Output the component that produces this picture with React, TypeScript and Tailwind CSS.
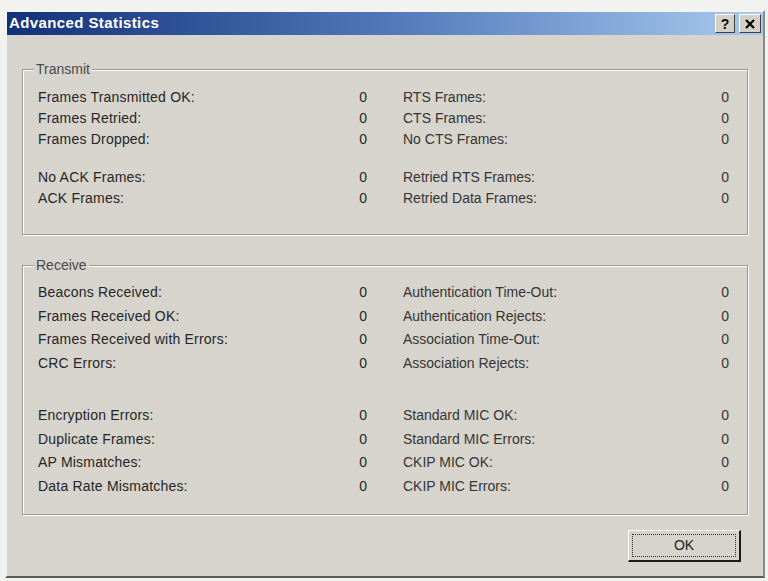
import React from "react";

type Pair = [string, string];
type Row = [Pair, Pair];

const transmit: Row[][] = [
  [
    [["Frames Transmitted OK:", "0"], ["RTS Frames:", "0"]],
    [["Frames Retried:", "0"], ["CTS Frames:", "0"]],
    [["Frames Dropped:", "0"], ["No CTS Frames:", "0"]],
  ],
  [
    [["No ACK Frames:", "0"], ["Retried RTS Frames:", "0"]],
    [["ACK Frames:", "0"], ["Retried Data Frames:", "0"]],
  ],
];

const receive: Row[][] = [
  [
    [["Beacons Received:", "0"], ["Authentication Time-Out:", "0"]],
    [["Frames Received OK:", "0"], ["Authentication Rejects:", "0"]],
    [["Frames Received with Errors:", "0"], ["Association Time-Out:", "0"]],
    [["CRC Errors:", "0"], ["Association Rejects:", "0"]],
  ],
  [
    [["Encryption Errors:", "0"], ["Standard MIC OK:", "0"]],
    [["Duplicate Frames:", "0"], ["Standard MIC Errors:", "0"]],
    [["AP Mismatches:", "0"], ["CKIP MIC OK:", "0"]],
    [["Data Rate Mismatches:", "0"], ["CKIP MIC Errors:", "0"]],
  ],
];

function StatRow({ row, h }: { row: Row; h: string }) {
  return (
    <div className={`flex items-center ${h}`}>
      <div className="flex w-[329px] justify-between text-[#262626]">
        <span className="tracking-[0.2px]">{row[0][0]}</span>
        <span>{row[0][1]}</span>
      </div>
      <div className="w-[36px]" />
      <div className="flex w-[326px] justify-between text-[#353535]">
        <span>{row[1][0]}</span>
        <span>{row[1][1]}</span>
      </div>
    </div>
  );
}

function Group({
  title,
  groups,
  rowH,
  gap,
  className,
}: {
  title: string;
  groups: Row[][];
  rowH: string;
  gap: string;
  className: string;
}) {
  return (
    <div
      className={`relative border border-[#9a9890] shadow-[inset_1px_1px_0_#ffffff,1px_1px_0_#ffffff] ${className}`}
    >
      <span className="absolute -top-[10px] left-[11px] bg-[#d7d4cd] px-[2px] text-[14px] leading-[18px] text-[#4a4a4a]">
        {title}
      </span>
      <div className={`flex flex-col pl-[15px] ${gap}`}>
        {groups.map((g, i) => (
          <div key={i} className="flex flex-col">
            {g.map((r, j) => (
              <StatRow key={j} row={r} h={rowH} />
            ))}
          </div>
        ))}
      </div>
    </div>
  );
}

export default function App() {
  return (
    <div
      className="h-[581px] w-[768px] overflow-hidden bg-[#f2f2f0] pl-[5px] pt-[10px]"
      style={{ fontFamily: '"Liberation Sans", Arial, sans-serif' }}
    >
      <div className="flex h-[568px] w-[760px] flex-col border-b-2 border-l-2 border-r-2 border-t-2 border-b-[#5a5a58] border-l-[#f4f3f0] border-r-[#8a8984] border-t-[#f4f3f0] bg-[#d7d4cd]">
        <div className="flex h-[23px] items-center justify-between bg-gradient-to-r from-[#13307a] via-[#5078b8] to-[#aacbef] pl-[2px] pr-[2px]">
          <span className="text-[15px] font-bold tracking-[0.4px] text-white">Advanced Statistics</span>
          <div className="flex gap-[4px]">
            <div className="flex h-[19px] w-[20px] items-center justify-center border border-b-[#404040] border-l-[#ffffff] border-r-[#404040] border-t-[#ffffff] bg-[#d4d0c8] text-[14px] font-bold leading-none text-black">
              ?
            </div>
            <div className="flex h-[19px] w-[22px] items-center justify-center border border-b-[#404040] border-l-[#ffffff] border-r-[#404040] border-t-[#ffffff] bg-[#d4d0c8]">
              <svg width="10" height="10" viewBox="0 0 10 10">
                <path d="M1 1 L9 9 M9 1 L1 9" stroke="#000" strokeWidth="2.2" />
              </svg>
            </div>
          </div>
        </div>
        <div className="flex flex-1 flex-col px-[15px] pt-[34px] text-[14px]">
          <Group
            title="Transmit"
            groups={transmit}
            rowH="h-[21px]"
            gap="gap-[17px]"
            className="h-[166px] pt-[17px]"
          />
          <Group
            title="Receive"
            groups={receive}
            rowH="h-[23.5px]"
            gap="gap-[29px]"
            className="mt-[30px] h-[250px] pt-[15px]"
          />
          <div className="mt-[15px] flex justify-end pr-[7px]">
            <div className="flex h-[32px] w-[113px] items-center justify-center border border-b-2 border-r-2 border-b-[#1a1a1a] border-l-[#ffffff] border-r-[#1a1a1a] border-t-[#ffffff] bg-[#d7d4cd] p-[3px]">
              <div className="flex h-full w-full items-center justify-center border border-dotted border-[#333]">
                <span className="text-[14px] text-[#222]">OK</span>
              </div>
            </div>
          </div>
        </div>
      </div>
    </div>
  );
}
